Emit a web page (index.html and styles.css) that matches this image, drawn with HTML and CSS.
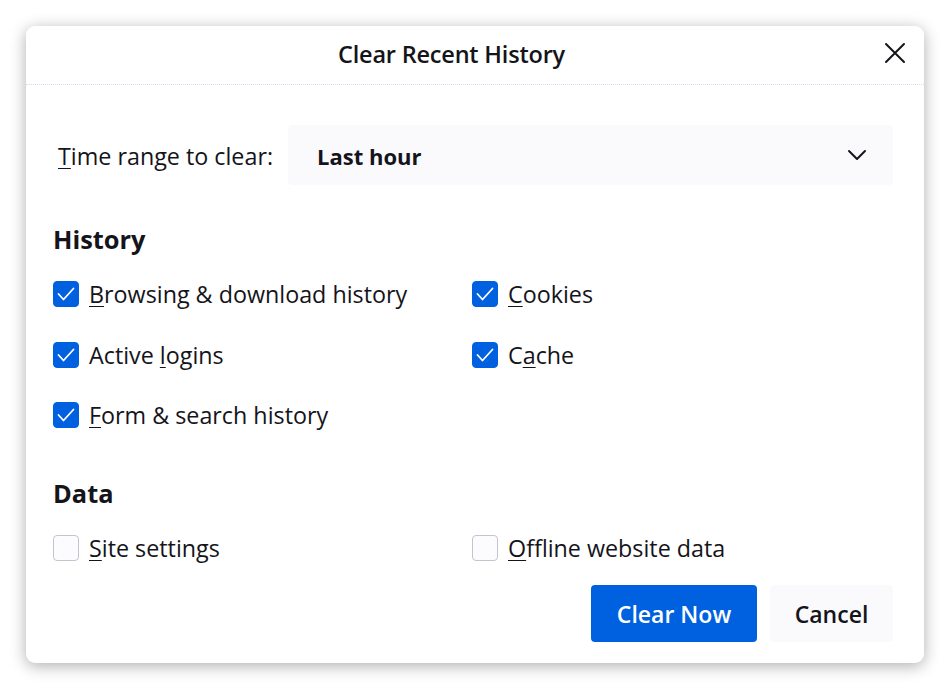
FILE: index.html
```html
<!DOCTYPE html>
<html lang="en">
<head>
<meta charset="utf-8">
<title>Clear Recent History</title>
<link rel="stylesheet" href="styles.css">
</head>
<body>
<div class="dialog">
  <header class="header">
    <h1 class="title">Clear Recent History</h1>
    <button class="close" aria-label="Close">
      <svg width="22" height="22" viewBox="0 0 22 22"><path d="M2 2 L20 20 M20 2 L2 20" stroke="#15141a" stroke-width="2" fill="none" stroke-linecap="round"/></svg>
    </button>
  </header>
  <main class="content">
    <div class="range-row">
      <span class="range-label"><u>T</u>ime range to clear:</span>
      <div class="select">
        <span class="select-value">Last hour</span>
        <svg class="chevron" width="20" height="12" viewBox="0 0 20 12"><path d="M2 2 L10 10 L18 2" stroke="#15141a" stroke-width="2" fill="none" stroke-linecap="round" stroke-linejoin="round"/></svg>
      </div>
    </div>

    <h2 class="section">History</h2>
    <div class="grid">
      <label class="item"><span class="box checked"><svg width="26" height="26" viewBox="0 0 26 26"><path d="M5.5 13 L10.5 18.5 L20.5 7.5" stroke="#fff" stroke-width="1.8" fill="none" stroke-linecap="round" stroke-linejoin="round"/></svg></span><span><u>B</u>rowsing &amp; download history</span></label>
      <label class="item"><span class="box checked"><svg width="26" height="26" viewBox="0 0 26 26"><path d="M5.5 13 L10.5 18.5 L20.5 7.5" stroke="#fff" stroke-width="1.8" fill="none" stroke-linecap="round" stroke-linejoin="round"/></svg></span><span><u>C</u>ookies</span></label>
      <label class="item"><span class="box checked"><svg width="26" height="26" viewBox="0 0 26 26"><path d="M5.5 13 L10.5 18.5 L20.5 7.5" stroke="#fff" stroke-width="1.8" fill="none" stroke-linecap="round" stroke-linejoin="round"/></svg></span><span>Active <u>l</u>ogins</span></label>
      <label class="item"><span class="box checked"><svg width="26" height="26" viewBox="0 0 26 26"><path d="M5.5 13 L10.5 18.5 L20.5 7.5" stroke="#fff" stroke-width="1.8" fill="none" stroke-linecap="round" stroke-linejoin="round"/></svg></span><span>C<u>a</u>che</span></label>
      <label class="item"><span class="box checked"><svg width="26" height="26" viewBox="0 0 26 26"><path d="M5.5 13 L10.5 18.5 L20.5 7.5" stroke="#fff" stroke-width="1.8" fill="none" stroke-linecap="round" stroke-linejoin="round"/></svg></span><span><u>F</u>orm &amp; search history</span></label>
    </div>

    <h2 class="section section-data">Data</h2>
    <div class="grid">
      <label class="item"><span class="box"></span><span><u>S</u>ite settings</span></label>
      <label class="item"><span class="box"></span><span><u>O</u>ffline website data</span></label>
    </div>

    <div class="actions">
      <button class="btn primary">Clear Now</button>
      <button class="btn secondary">Cancel</button>
    </div>
  </main>
</div>
</body>
</html>
```

FILE: styles.css
```css
html, body {
  margin: 0;
  padding: 0;
  background: #ffffff;
}
body {
  font-family: "Open Sans", "Noto Sans", "Liberation Sans", sans-serif;
  color: #15141a;
  padding: 26px;
  width: 898px;
  box-sizing: content-box;
}
.dialog {
  width: 898px;
  height: 637px;
  background: #fff;
  border-radius: 9px;
  box-shadow: 0 3px 16px rgba(0, 0, 0, 0.32);
  display: flex;
  flex-direction: column;
  overflow: hidden;
}
.header {
  height: 59px;
  flex: none;
  display: flex;
  align-items: center;
  justify-content: center;
  position: relative;
  border-bottom: 1px dotted #dcd8f6;
  box-sizing: border-box;
  padding-right: 47px;
}
.title {
  margin: 0 0 3px;
  font-size: 23.5px;
  font-weight: 600;
  letter-spacing: -0.2px;
  line-height: 32px;
}
.close {
  position: absolute;
  right: 18px;
  top: 16px;
  background: none;
  border: 0;
  padding: 0;
  width: 22px;
  height: 22px;
}
.content {
  padding: 40px 31px 21px 27px;
  display: flex;
  flex-direction: column;
  flex: 1;
}
.range-row {
  display: flex;
  align-items: center;
  height: 60px;
}
.range-label {
  font-size: 23.3px;
  padding-left: 5px;
  width: 230px;
  flex: none;
  padding-top: 2px;
}
.select {
  flex: 1;
  height: 60px;
  background: #fafafd;
  border-radius: 4px;
  display: flex;
  align-items: center;
  justify-content: space-between;
  padding: 0 26px 0 29px;
}
.select-value {
  font-size: 22px;
  font-weight: 700;
  padding-top: 2px;
}
.chevron {
  flex: none;
}
.section {
  margin: 38px 0 0;
  font-size: 25.4px;
  font-weight: 700;
  line-height: 32px;
}
.section-data {
  margin-top: 31px;
}
.grid {
  display: grid;
  grid-template-columns: 419px 1fr;
  grid-auto-rows: 60.5px;
  margin-top: 9px;
}
.item {
  display: flex;
  align-items: center;
  gap: 10px;
  font-size: 23.3px;
}
.box {
  width: 26px;
  height: 26px;
  box-sizing: border-box;
  border-radius: 4px;
  border: 1px solid #c5c3cf;
  background: #fcfcfe;
  flex: none;
  display: flex;
}
.box.checked {
  background: #0061e0;
  border-color: #0061e0;
}
.box svg {
  margin: -1px;
}
u {
  text-decoration-thickness: 1px;
  text-underline-offset: 3px;
}
.actions {
  margin-top: auto;
  display: flex;
  justify-content: flex-end;
  gap: 13px;
}
.btn {
  height: 57px;
  border: 0;
  border-radius: 4px;
  font-family: inherit;
  font-size: 23px;
  font-weight: 600;
  cursor: pointer;
}
.primary {
  width: 166px;
  background: #0061e0;
  color: #fff;
}
.secondary {
  width: 123px;
  background: #fafafd;
  color: #15141a;
}
```
